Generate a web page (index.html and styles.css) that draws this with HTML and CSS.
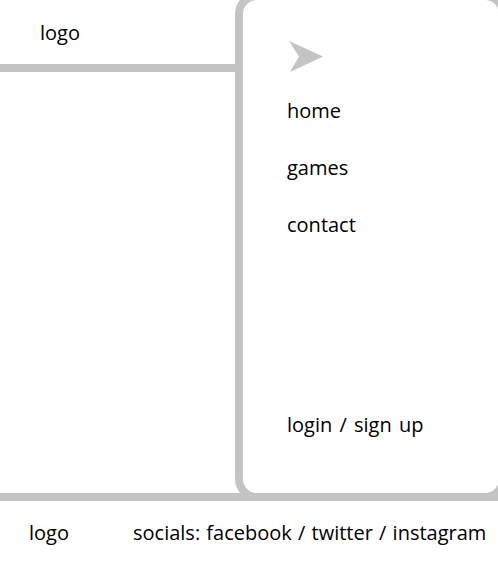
FILE: index.html
```html
<!DOCTYPE html>
<html lang="en">
<head>
    <meta charset="UTF-8">
    <meta name="viewport" content="width=device-width, initial-scale=1.0">
    <title>Wireframe</title>
    <link rel="stylesheet" href="styles.css">
</head>
<body>
    <div class="layout">
        <div class="main">
            <header class="header">logo</header>
        </div>
        <aside class="sidebar">
            <svg class="arrow" width="34" height="31" viewBox="0 0 34 31">
                <path d="M0 0 L34 15.5 L1 31 L10 15.5 Z" fill="#c4c4c4"/>
            </svg>
            <nav class="nav">
                <a href="#">home</a>
                <a href="#">games</a>
                <a href="#">contact</a>
            </nav>
            <a class="login" href="#">login / sign up</a>
        </aside>
    </div>
    <footer class="footer">
        <span class="footer-logo">logo</span>
        <span class="socials">socials: facebook / twitter / instagram</span>
    </footer>
</body>
</html>
```

FILE: styles.css
```css
body {
    margin: 0;
    overflow: hidden;
    font-family: "Open Sans", "Noto Sans", sans-serif;
    font-size: 20px;
    color: #000;
    background: #fff;
}
a {
    color: inherit;
    text-decoration: none;
}
.layout {
    display: flex;
    align-items: flex-start;
    height: 493px;
}
.main {
    width: 235px;
    flex: none;
}
.header {
    height: 64px;
    border-bottom: 8px solid #c4c4c4;
    display: flex;
    align-items: center;
    padding-left: 40px;
}
.sidebar {
    flex: none;
    box-sizing: border-box;
    width: 272px;
    height: 509px;
    margin-top: -8px;
    border: 8px solid #c4c4c4;
    border-radius: 22px;
    background: #fff;
    position: relative;
    z-index: 1;
    display: flex;
    flex-direction: column;
    align-items: flex-start;
    padding: 41px 0 55px 44px;
}
.arrow {
    margin-left: 2px;
    display: block;
}
.nav {
    display: flex;
    flex-direction: column;
    gap: 31px;
    margin-top: 26px;
    line-height: 26px;
}
.login {
    margin-top: auto;
    line-height: 26px;
    word-spacing: 2px;
}
.footer {
    border-top: 8px solid #c4c4c4;
    height: 63px;
    display: flex;
    align-items: center;
    padding-left: 29px;
}
.footer-logo {
    width: 104px;
}
.socials {
    word-spacing: 1px;
    white-space: nowrap;
}
```
